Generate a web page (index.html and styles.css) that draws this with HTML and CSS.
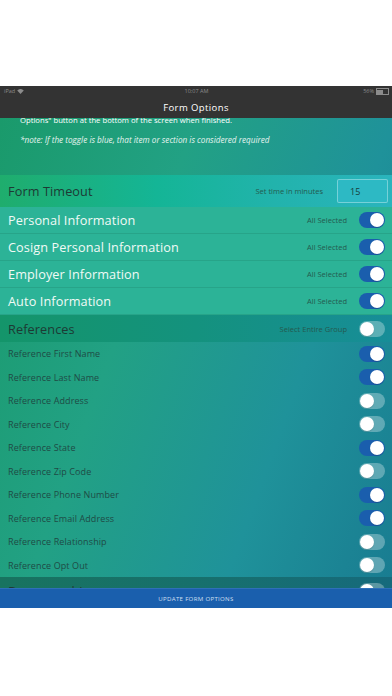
FILE: index.html
```html
<!DOCTYPE html>
<html lang="en">
<head>
    <meta charset="UTF-8">
    <meta name="viewport" content="width=device-width, initial-scale=1.0">
    <title>Form Options</title>
    <link rel="stylesheet" href="styles.css">
</head>
<body>
<div class="device">
    <div class="status-bar">
        <span class="status-left">iPad
            <svg width="7" height="5" viewBox="0 0 14 10"><path d="M7 10 L0.5 3 A9.5 9.5 0 0 1 13.5 3 Z" fill="#8c8c8c"/></svg>
        </span>
        <span class="status-time">10:07 AM</span>
        <span class="status-right">56%
            <span class="battery"><span class="battery-level"></span></span>
        </span>
    </div>
    <div class="nav-bar">Form Options</div>

    <div class="content">
        <div class="scroll">
            <div class="intro">
                <p class="lead">Options" button at the bottom of the screen when finished.</p>
                <p class="note">*note: If the toggle is blue, that item or section is considered required</p>
            </div>

            <div class="timeout-row">
                <span class="row-title dark">Form Timeout</span>
                <span class="hint">Set time in minutes</span>
                <div class="timeout-input">15</div>
            </div>

            <div class="section-row">
                <span class="row-title">Personal Information</span>
                <span class="hint">All Selected</span>
                <span class="toggle on"></span>
            </div>
            <div class="section-row">
                <span class="row-title">Cosign Personal Information</span>
                <span class="hint">All Selected</span>
                <span class="toggle on"></span>
            </div>
            <div class="section-row">
                <span class="row-title">Employer Information</span>
                <span class="hint">All Selected</span>
                <span class="toggle on"></span>
            </div>
            <div class="section-row">
                <span class="row-title">Auto Information</span>
                <span class="hint">All Selected</span>
                <span class="toggle on"></span>
            </div>

            <div class="group-row">
                <span class="row-title dark">References</span>
                <span class="hint">Select Entire Group</span>
                <span class="toggle"></span>
            </div>
            <div class="item-row"><span class="item-label">Reference First Name</span><span class="toggle on"></span></div>
            <div class="item-row"><span class="item-label">Reference Last Name</span><span class="toggle on"></span></div>
            <div class="item-row"><span class="item-label">Reference Address</span><span class="toggle"></span></div>
            <div class="item-row"><span class="item-label">Reference City</span><span class="toggle"></span></div>
            <div class="item-row"><span class="item-label">Reference State</span><span class="toggle on"></span></div>
            <div class="item-row"><span class="item-label">Reference Zip Code</span><span class="toggle"></span></div>
            <div class="item-row"><span class="item-label">Reference Phone Number</span><span class="toggle on"></span></div>
            <div class="item-row"><span class="item-label">Reference Email Address</span><span class="toggle on"></span></div>
            <div class="item-row"><span class="item-label">Reference Relationship</span><span class="toggle"></span></div>
            <div class="item-row"><span class="item-label">Reference Opt Out</span><span class="toggle"></span></div>

            <div class="group-row deep">
                <span class="row-title dark">Demographics</span>
                <span class="hint">Select Entire Group</span>
                <span class="toggle"></span>
            </div>
        </div>
    </div>

    <button class="update-btn" type="button">UPDATE FORM OPTIONS</button>
</div>
</body>
</html>
```

FILE: styles.css
```css
body {
    margin: 0;
    background-color: #fff;
    font-family: "Open Sans", "Noto Sans", sans-serif;
}
.device {
    margin-top: 86px;
    height: 522px;
    display: flex;
    flex-direction: column;
    overflow: hidden;
}
.status-bar {
    height: 11px;
    background-color: #333;
    color: #8c8c8c;
    font-size: 5.5px;
    line-height: 7px;
    display: flex;
    align-items: center;
    justify-content: space-between;
    padding: 0 3px 0 4px;
}
.status-left, .status-right {
    display: flex;
    align-items: center;
    gap: 2px;
    width: 60px;
}
.status-right {
    justify-content: flex-end;
}
.battery {
    width: 10px;
    height: 4px;
    border: 0.5px solid #8c8c8c;
    display: flex;
    padding: 0.5px;
}
.battery-level {
    width: 56%;
    background-color: #8c8c8c;
}
.nav-bar {
    height: 21px;
    background-color: #333;
    color: #fff;
    font-size: 9.5px;
    line-height: 13px;
    letter-spacing: 0.4px;
    display: flex;
    align-items: center;
    justify-content: center;
    padding-bottom: 1px;
    box-sizing: border-box;
}
.content {
    flex: 1;
    overflow: hidden;
    background: linear-gradient(110deg, #1a9a6b 0%, #22a184 35%, #1f929a 70%, #197c91 100%);
}
.scroll {
    margin-top: -3.5px;
}
.intro {
    padding: 0 20px;
    color: #fff;
    font-size: 7.7px;
    line-height: 11px;
}
.intro p {
    margin: 0;
}
.note {
    margin-top: 8px !important;
    font-style: italic;
    font-size: 8.2px;
    color: #e6f4ef;
}
.timeout-row {
    margin-top: 30.5px;
    height: 32px;
    display: flex;
    align-items: center;
    padding: 0 4px 0 8px;
    background: linear-gradient(90deg, #1fad6d 0%, #14b596 40%, #22b3ac 70%, #2ab4bd 100%);
}
.row-title {
    flex: 1;
    font-size: 12.7px;
    letter-spacing: 0.1px;
    color: #f1faf6;
    white-space: nowrap;
}
.row-title.dark {
    color: #1d3a34;
}
.hint {
    font-size: 7.5px;
    color: #245a4f;
    margin-right: 12px;
}
.timeout-row .hint {
    margin-right: 14px;
}
.timeout-input {
    width: 51px;
    height: 24px;
    box-sizing: border-box;
    background-color: #2db9c4;
    border: 1px solid rgba(255, 255, 255, 0.35);
    border-radius: 2px;
    font-size: 9px;
    color: #17403c;
    display: flex;
    align-items: center;
    padding-left: 12px;
}
.section-row {
    height: 27px;
    box-sizing: border-box;
    display: flex;
    align-items: center;
    padding: 0 7px 0 8px;
    background-color: #2cb397;
    border-bottom: 1px solid #27a489;
}
.group-row {
    height: 27px;
    display: flex;
    align-items: center;
    padding: 0 7px 0 8px;
    background: linear-gradient(90deg, #14956a 0%, #14927e 50%, #178d98 100%);
}
.group-row.deep {
    background: linear-gradient(90deg, #18735f 0%, #17706c 50%, #166a7c 100%);
}
.item-row {
    height: 23.5px;
    display: flex;
    align-items: center;
    padding: 0 7px 0 8px;
}
.item-label {
    flex: 1;
    font-size: 9px;
    letter-spacing: 0.1px;
    color: #1f4b45;
}
.toggle {
    width: 26px;
    height: 16px;
    box-sizing: border-box;
    border-radius: 8px;
    padding: 1px;
    display: flex;
    align-items: center;
    background-color: rgba(255, 255, 255, 0.3);
}
.toggle::after {
    content: "";
    width: 14px;
    height: 14px;
    border-radius: 50%;
    background-color: #fff;
    box-shadow: 0 1px 1px rgba(0, 0, 0, 0.15);
}
.toggle.on {
    background-color: #1a5ead;
    justify-content: flex-end;
}
.update-btn {
    height: 20px;
    border: none;
    border-top: 1px solid #2f6fb8;
    background-color: #1a5fad;
    color: #cfdff0;
    font-family: "Open Sans", "Noto Sans", sans-serif;
    font-size: 6.1px;
    letter-spacing: 0.3px;
    padding: 0;
    flex-shrink: 0;
}
```
